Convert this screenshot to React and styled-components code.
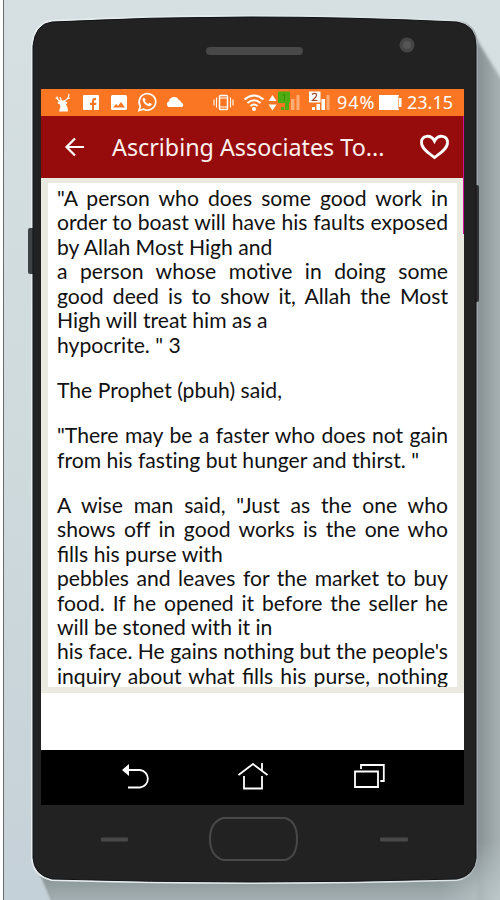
import React from "react";
import styled, { createGlobalStyle } from "styled-components";

const Global = createGlobalStyle`
  * { box-sizing: border-box; }
  body { margin: 0; background: #fff; }
`;

const Scene = styled.main`
  position: relative;
  width: 500px;
  height: 900px;
  overflow: hidden;
`;
const Backdrop = styled.svg`
  position: absolute;
  inset: 0;
`;
const Screen = styled.section`
  position: relative;
  width: 423px;
  height: 716px;
  margin: 89px 0 0 41px;
  display: flex;
  flex-direction: column;
  background: #fff;
`;
const EdgeGlow = styled.i`
  position: absolute;
  right: 0;
  top: 27px;
  width: 1px;
  height: 118px;
  background: #d0109c;
`;
const StatusBar = styled.div`
  height: 27px;
  flex: none;
  background: #fb7622;
  color: #fff;
  font: 18px/27px "Noto Sans", sans-serif;
  display: flex;
  align-items: center;
`;
const StatusIcons = styled.svg`
  flex: none;
  display: block;
`;
const StatusText = styled.span`
  width: ${(p) => p.$w}px;
  flex: none;
  white-space: nowrap;
  letter-spacing: ${(p) => p.$track || 0}px;
`;
const AppBar = styled.header`
  height: 62px;
  flex: none;
  background: #960c0c;
  display: flex;
  align-items: center;
  padding: 0 14px 0 23px;
`;
const Title = styled.h1`
  margin: 0 0 0 26px;
  flex: 1;
  white-space: nowrap;
  font: 400 23.3px/30px "Noto Sans", sans-serif;
  color: #fdf0ec;
`;
const Reader = styled.article`
  height: 515px;
  flex: none;
  border: solid #ebeae0;
  border-width: 5px 7px 6px 7px;
  padding: 3px 9px 0 9px;
  overflow: hidden;
  font: 21.15px/24.43px Lato, sans-serif;
  color: #111;
`;
const Paragraph = styled.p`
  margin: 0 0 20.8px;
`;
const Line = styled.span`
  display: block;
  white-space: nowrap;
  text-align: left;
  text-align-last: ${(p) => (p.$full ? "justify" : "left")};
  font-variant-ligatures: ${(p) => (p.$plain ? "none" : "normal")};
`;
const NavBar = styled.nav`
  margin-top: auto;
  height: 55px;
  background: #000;
  display: flex;
  align-items: center;
  padding: 0 78px 1px 79px;
  justify-content: space-between;
`;
const Icon = styled.svg`
  display: block;
  flex: none;
  fill: none;
  stroke: #fff;
`;

const paragraphs = [
  [
    ['"A person who does some good work in', 1],
    ["order to boast will have his faults exposed", 1],
    ["by Allah Most High and", 0],
    ["a person whose motive in doing some", 1],
    ["good deed is to show it, Allah the Most", 1],
    ["High will treat him as a", 0],
    ['hypocrite. " 3', 0],
  ],
  [["The Prophet (pbuh) said,", 0]],
  [
    ['"There may be a faster who does not gain', 1],
    ['from his fasting but hunger and thirst. "', 0],
  ],
  [
    ['A wise man said, "Just as the one who', 1],
    ["shows off in good works is the one who", 1],
    ["fills his purse with", 0],
    ["pebbles and leaves for the market to buy", 1],
    ["food. If he opened it before the seller he", 1],
    ["will be stoned with it in", 0],
    ["his face. He gains nothing but the people's", 1],
    ["inquiry about what fills his purse, nothing", 1],
  ],
];

const body =
  "M52 22Q150 17 250 17T457 22Q476 25 476 46V858Q474 876 457 879Q250 885 52 879Q34 875 33 858V46Q35 24 52 22Z";

function PhoneArt() {
  return (
    <Backdrop width="500" height="900" viewBox="0 0 500 900" aria-hidden="true">
      <defs>
        <linearGradient id="bg" x1="0" y1="0" x2="0" y2="1">
          <stop offset="0" stopColor="#d6e0e2" />
          <stop offset=".5" stopColor="#cfdadd" />
          <stop offset="1" stopColor="#c5d1d8" />
        </linearGradient>
        <linearGradient id="side" x1="476" y1="0" x2="500" y2="0" gradientUnits="userSpaceOnUse">
          <stop offset="0" stopColor="#858f92" />
          <stop offset="1" stopColor="#a7b1b4" />
        </linearGradient>
        <linearGradient id="under" x1="0" y1="878" x2="0" y2="900" gradientUnits="userSpaceOnUse">
          <stop offset="0" stopColor="#8c9799" />
          <stop offset="1" stopColor="#a3afb2" />
        </linearGradient>
        <radialGradient id="corner" cx="500" cy="900" r="60" gradientUnits="userSpaceOnUse">
          <stop offset="0" stopColor="#bcc7ca" />
          <stop offset="1" stopColor="#bcc7ca" stopOpacity="0" />
        </radialGradient>
        <linearGradient id="rim" x1="0" y1="0" x2="1" y2="0">
          <stop offset="0" stopColor="#e8eef0" />
          <stop offset=".95" stopColor="#dde4e6" />
          <stop offset="1" stopColor="#a2a9ac" />
        </linearGradient>
        <filter id="soft"><feGaussianBlur stdDeviation="1.5" /></filter>
        <filter id="edge"><feGaussianBlur stdDeviation="0.7" /></filter>
      </defs>
      <rect x="4" width="496" height="900" fill="url(#bg)" />
      <rect x="3" width="1" height="900" fill="#686c6e" />
      <path d="M472 32L508 90V910H56L38 868Z" fill="url(#side)" filter="url(#soft)" />
      <path d="M40 872H478V905H54Z" fill="url(#under)" filter="url(#soft)" />
      <rect x="430" y="830" width="70" height="70" fill="url(#corner)" />
      <path d={body} fill="none" stroke="url(#rim)" strokeWidth="4" filter="url(#edge)" />
      <rect x="28" y="228" width="7" height="46" rx="2" fill="#3d4244" filter="url(#edge)" />
      <rect x="473" y="185" width="6" height="117" rx="2" fill="#303234" filter="url(#edge)" />
      <path d={body} fill="#222" stroke="#111316" strokeWidth="1" />
      <rect x="206" y="47" width="97" height="8" rx="4" fill="#484848" />
      <circle cx="407" cy="45" r="7.5" fill="#454545" />
      <circle cx="407" cy="45" r="4" fill="#555" />
      <rect x="101" y="837.500" width="27" height="4" rx="1" fill="#484848" />
      <rect x="380" y="837.500" width="28" height="4" rx="1" fill="#484848" />
      <path d="M223 818H285Q297 821 297 839Q297 857 285 860H223Q210 856 210 839Q210 822 223 818Z" fill="none" stroke="#484848" strokeWidth="2" />
    </Backdrop>
  );
}

function Notifications() {
  return (
    <StatusIcons width="296" height="27" viewBox="41 89 296 27" fill="#fff">
      <path d="M58 102l2-1.500h4l3.500 2-1.500 2 1.500 3 .5 4h-9l1.500-5-1-2.500-2-.5z" />
      <path d="M61 101.500q-4-1-4-5M58.500 99l-3-1M64 101q5-2 5-7M66.500 99l3.500-1M61.500 101l-1.500-4" fill="none" stroke="#fff" strokeWidth="1.200" />
      <rect x="83" y="95" width="16" height="15" rx="1" />
      <path d="M92 110v-5h-2v-2.300h2v-2q0-3 4-3v2.200q-2 0-2 1.200v1.600h2.500l-.4 2.300H94v5z" fill="#fb7622" />
      <rect x="111" y="95" width="16" height="15" rx="1.500" />
      <path d="M113 107.500l3-3.500 2 2 3-4 4 5.500z" fill="#fb7622" />
      <path d="M139 110.500l1.300-4.300a8.300 8.300 0 1 1 3 2.900z" fill="none" stroke="#fff" strokeWidth="1.700" />
      <path d="M144 97.500q-2 1-1.200 3.200 2 4.600 6.200 5.600 2.500 0 2.900-2.300l-2.400-1.300-1.300 1.300q-2.200-.8-3.400-3l1-1.200z" />
      <path d="M168.500 107a3.200 3.200 0 0 1 .4-5.800 5.300 5.300 0 0 1 10-1.100 3 3 0 0 1 2.300 2.300 2.600 2.600 0 0 1 1 4.600z" />
      <g fill="none" stroke="#fff">
        <rect x="219.500" y="95.500" width="8" height="14" rx="1" strokeWidth="1.500" />
        <path d="M219 98h9M219 107h9M216.500 97.500v10M214 99.500v6M230.500 97.500v10M233 99.500v6" strokeWidth="1.100" />
        <path d="M244.500 99.500q9.500-8 19 0M247.500 103q6.500-5.500 13 0M250.500 106q3.500-3 7 0" strokeWidth="2.100" />
      </g>
      <circle cx="254" cy="109" r="2" />
      <path d="M268.500 101l4-6 4 6zM268.500 104.500h8l-4 6z" />
      <rect x="278" y="91.500" width="12" height="11.500" rx="1" fill="#4dac12" />
      <path d="M284.500 94v7M282.500 95.500l2-1.500" stroke="#399000" fill="none" />
      <path d="M281 107h3v3h-3zM285 103h4v7h-4z" fill="#4dac12" />
      <path d="M291 99h3.500v11H291zM296.500 95h3v15h-3z" fill="#ffad77" />
      <rect x="309" y="91.500" width="11.500" height="11" />
      <path d="M312 94.500q2-2 4.500-.5 1 2-4 6.500h5" stroke="#9e4920" strokeWidth="1.200" fill="none" />
      <path d="M312 107h3v3h-3zM316.500 104h3.500v6h-3.500zM321.500 99h3.500v11h-3.500z" />
      <path d="M326.500 95h3v15h-3z" fill="#ffad77" />
    </StatusIcons>
  );
}

export default function App() {
  return (
    <>
      <Global />
      <Scene>
        <PhoneArt />
        <Screen>
          <StatusBar>
            <Notifications />
            <StatusText $w={41} $track={0.9}>94%</StatusText>
            <StatusIcons width="29" height="27" viewBox="378 89 29 27" fill="#fff">
              <path d="M379 95h20v3h2.500v9H399v3h-20z" />
              <path d="M398.500 96v13" stroke="#ffb17d" />
            </StatusIcons>
            <StatusText $w={50}>23.15</StatusText>
          </StatusBar>
          <AppBar>
            <Icon width="22" height="22" viewBox="0 0 22 22" strokeWidth="2.200">
              <path d="M20 11H3M11 2.500L2.500 11l8.500 8.500" />
            </Icon>
            <Title>Ascribing Associates To...</Title>
            <Icon width="31" height="26" viewBox="0 0 31 26" strokeWidth="2.800">
              <path d="M15.500 23.500C10 19.500 2.500 15 2.500 8.500 2.500 1 12 0 15.500 7 19 0 28.500 1 28.500 8.500 28.500 15 21 19.500 15.500 23.500Z" />
            </Icon>
          </AppBar>
          <Reader>
            {paragraphs.map((lines, i) => (
              <Paragraph key={i}>
                {lines.map(([text, full]) => (
                  <Line key={text} $full={!!full} $plain={!text.includes("fi")}>{text}</Line>
                ))}
              </Paragraph>
            ))}
          </Reader>
          <NavBar>
            <Icon width="32" height="28" viewBox="120 763 32 28" strokeWidth="1.800">
              <path d="M128 770h12a8.800 8.800 0 0 1 0 17.500h-12" />
              <path d="M122 770l7-6v12z" fill="#fff" stroke="none" />
            </Icon>
            <Icon width="32" height="28" viewBox="237 763 32 28" strokeWidth="1.800">
              <path d="M238.500 775L253 764l14.500 11M262 771v-8M244 776v12.500h18V776" />
            </Icon>
            <Icon width="32" height="28" viewBox="354 763 32 28" strokeWidth="1.800">
              <path d="M355 771.500h23v15.500h-23zM361 769v-4h22.800v16h-3.500" />
            </Icon>
          </NavBar>
          <EdgeGlow />
        </Screen>
      </Scene>
    </>
  );
}
